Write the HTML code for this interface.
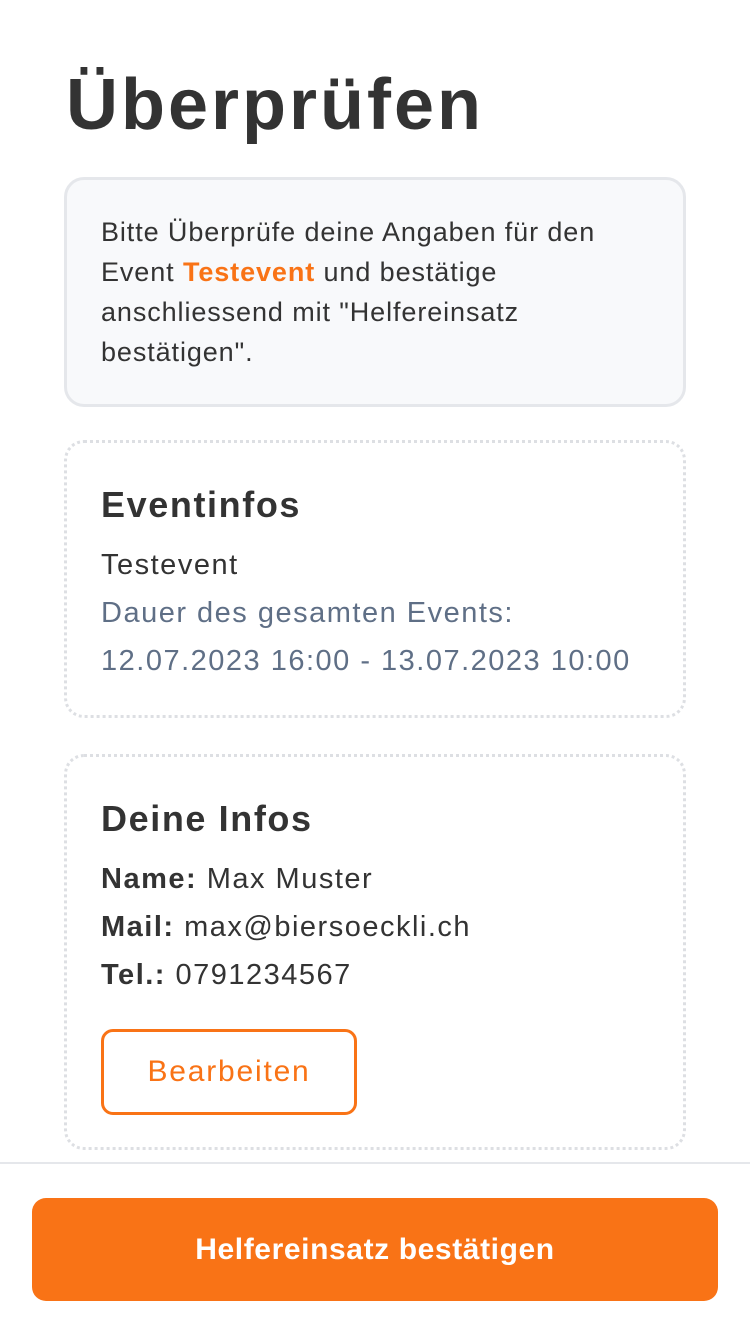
<!DOCTYPE html>
<html><head><meta charset="utf-8"><style>
*{box-sizing:border-box;margin:0;padding:0}
body{width:750px;height:1334px;background:#fff;font-family:"Liberation Sans",sans-serif;color:#333;position:relative;overflow:hidden}
h1{position:absolute;left:66px;top:60px;font-size:72px;font-weight:bold;line-height:90px;color:#333;letter-spacing:3px}
.info{position:absolute;left:64px;top:177px;width:622px;height:230px;border:3px solid #e5e7eb;background:#f8f9fb;border-radius:20px;padding:32px 34px;font-size:27px;line-height:40px;letter-spacing:0.9px;white-space:nowrap}
.o{color:#f97316;font-weight:bold}
.card{position:absolute;left:64px;width:622px;border:3px dotted #dddfe3;border-radius:20px;padding:0 34px;white-space:nowrap}
h2{font-size:36px;font-weight:bold;line-height:48px;letter-spacing:1.6px}
.l{font-size:29px;line-height:48px;letter-spacing:1.5px}
.g{color:#5f6f86}
.btn{position:absolute;left:34px;top:272px;width:256px;height:86px;border:3px solid #f97316;border-radius:12px;color:#f97316;font-size:30px;text-align:center;line-height:80px;letter-spacing:1.8px}
.foot{position:absolute;left:0;top:1162px;width:750px;height:2px;background:#e5e7eb}
.main{position:absolute;left:32px;top:1198px;width:686px;height:103px;background:#f97316;border-radius:14px;color:#fff;font-size:30px;font-weight:bold;text-align:center;line-height:103px;letter-spacing:0.6px}
</style></head><body>
<h1>Überprüfen</h1>
<div class="info">Bitte Überprüfe deine Angaben für den<br>Event <span class="o">Testevent</span> und bestätige<br>anschliessend mit "Helfereinsatz<br>bestätigen".</div>
<div class="card" style="top:440px;height:278px;padding-top:38px">
<h2>Eventinfos</h2>
<div class="l" style="margin-top:12px">Testevent</div>
<div class="l g">Dauer des gesamten Events:<br>12.07.2023 16:00 - 13.07.2023 10:00</div>
</div>
<div class="card" style="top:754px;height:396px;padding-top:38px">
<h2>Deine Infos</h2>
<div class="l" style="margin-top:12px"><b>Name:</b> Max Muster</div>
<div class="l"><b>Mail:</b> max@biersoeckli.ch</div>
<div class="l"><b>Tel.:</b> 0791234567</div>
<div class="btn">Bearbeiten</div>
</div>
<div class="foot"></div>
<div class="main">Helfereinsatz bestätigen</div>
</body></html>
